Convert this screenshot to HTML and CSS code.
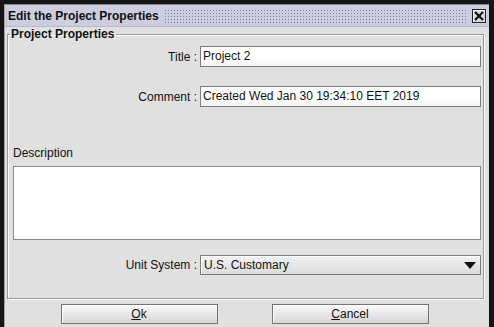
FILE: index.html
```html
<!DOCTYPE html>
<html lang="en">

<head>
	<meta charset="UTF-8">
	<title>Edit the Project Properties</title>
	<link rel="stylesheet" href="styles.css">
</head>

<body>
	<div class="window">
		<div class="titlebar">
			<span class="caption">Edit the Project Properties</span>
			<span class="dots"></span>
			<span class="close">
				<svg width="10" height="10" viewBox="0 0 10 10">
					<path d="M1 1 L9 9 M9 1 L1 9" stroke="#111" stroke-width="2.2" />
				</svg>
			</span>
		</div>
		<div class="content">
			<fieldset class="group">
				<legend>Project Properties</legend>
				<div class="row row-title">
					<label>Title :</label>
					<div class="field">Project 2</div>
				</div>
				<div class="row row-comment">
					<label>Comment :</label>
					<div class="field">Created Wed Jan 30 19:34:10 EET 2019</div>
				</div>
				<div class="desc-label">Description</div>
				<div class="textarea"></div>
				<div class="row row-unit">
					<label>Unit System :</label>
					<div class="combo">
						<span>U.S. Customary</span>
						<svg width="12" height="7" viewBox="0 0 12 7">
							<path d="M0 0 H12 L6 7 Z" fill="#111" />
						</svg>
					</div>
				</div>
			</fieldset>
			<div class="buttons">
				<div class="btn"><u>O</u>k</div>
				<div class="btn"><u>C</u>ancel</div>
			</div>
		</div>
	</div>
</body>

</html>
```
FILE: styles.css
```css
:root {
	--panel: #e0e0e0;
	--title: #cdcde0;
	--edge: #8a8a8a;
	--text: #111;
}

* {
	box-sizing: border-box;
}

body {
	margin: 0;
	padding: 0;
	height: 327px;
	overflow: hidden;
	background: #151515;
	font-family: 'Liberation Sans', Arial, sans-serif;
	font-size: 12px;
	color: var(--text);
}

.window {
	margin: 4px 5px 0 4px;
	height: 330px;
	border-top: 1px solid #8c8c8c;
	border-left: 1px solid #a0a0a0;
	background: var(--panel);
	display: flex;
	flex-direction: column;
}

.titlebar {
	height: 22px;
	background: var(--title);
	display: flex;
	align-items: center;
	padding: 0 3px 0 3px;
	border-bottom: 1px solid #b8b8c8;
}

.caption {
	font-weight: bold;
	font-size: 12px;
	white-space: nowrap;
}

.dots {
	flex: 1;
	height: 14px;
	margin: 0 5px 0 5px;
	background-image: radial-gradient(#7e7e98 0.7px, transparent 0.9px);
	background-size: 3px 3px;
}

.close {
	width: 14px;
	height: 14px;
	border: 1px solid #222;
	background: #d8d8d8;
	display: flex;
	align-items: center;
	justify-content: center;
	box-shadow: inset 1px 1px 0 #fff;
}

.content {
	flex: 1;
	padding: 0 5px 0 2px;
}

.group {
	margin: 0;
	height: 272px;
	padding: 0 2px 0 5px;
	border: 1px solid #9a9a9a;
	box-shadow: inset 1px 1px 0 #fff, 1px 1px 0 #fff;
}

legend {
	font-weight: bold;
	font-size: 12px;
	padding: 0 2px 0 1px;
	margin-left: -3px;
}

.row {
	display: grid;
	grid-template-columns: 187px 1fr;
	align-items: center;
}

.row label {
	text-align: right;
	padding-right: 3px;
}

.row-title {
	margin-top: 5px;
}

.row-comment {
	margin-top: 19px;
}

.row-unit {
	margin-top: 15px;
}

.field {
	height: 21px;
	line-height: 19px;
	padding-left: 2px;
	background: linear-gradient(#fff, #fff 60%, #f4f4f4);
	border: 1px solid #7c7c7c;
	white-space: nowrap;
}

.desc-label {
	margin-top: 39px;
	height: 20px;
}

.textarea {
	height: 74px;
	background: #fff;
	border: 1px solid #8a8a8a;
}

.combo {
	height: 20px;
	border: 1px solid #7c7c7c;
	background: linear-gradient(#f2f2f2, #dcdcdc);
	display: flex;
	align-items: center;
	justify-content: space-between;
	padding: 0 4px 0 3px;
	box-shadow: inset 1px 1px 0 #fff;
}

.buttons {
	display: flex;
	justify-content: center;
	gap: 54px;
	margin-top: 5px;
	padding-right: 2px;
}

.btn {
	width: 157px;
	height: 20px;
	line-height: 18px;
	text-align: center;
	border: 1px solid #747474;
	background: linear-gradient(#fafafa, #d6d6d6);
	box-shadow: inset 1px 1px 0 #fff;
}
```
